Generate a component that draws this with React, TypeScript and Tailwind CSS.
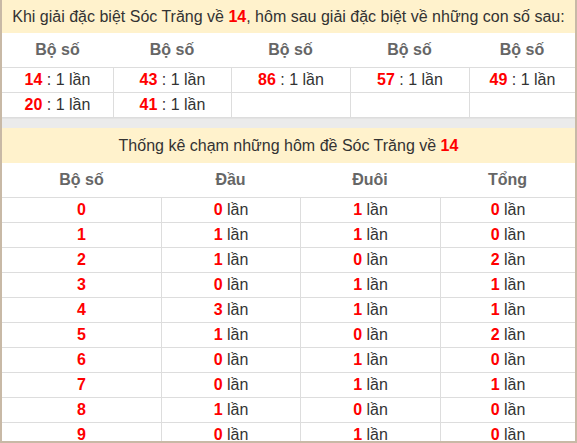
import React from "react";

const top = [
  ["14", "43", "86", "57", "49"],
  ["20", "41", "", "", ""],
];

const stats = [
  [0, 0, 1, 0],
  [1, 1, 1, 0],
  [2, 1, 0, 2],
  [3, 0, 1, 1],
  [4, 3, 1, 1],
  [5, 1, 0, 2],
  [6, 0, 1, 0],
  [7, 0, 1, 1],
  [8, 1, 0, 0],
  [9, 0, 1, 0],
];

const topCols = "grid grid-cols-[111px_118px_119px_119px_106px]";
const statCols = "grid grid-cols-[159px_139px_140px_135px]";

const Lan = ({ n }: { n: number }) => (
  <span>
    <b className="text-[#ff0000]">{n}</b> lần
  </span>
);

const App = () => {
  return (
    <div
      className="w-[577px] h-[443px] overflow-hidden border-x-2 border-b-2 border-[#c8b9a6] bg-white text-[16px] text-[#333]"
      style={{ fontFamily: '"Liberation Sans", Arial, sans-serif' }}
    >
      {/* first table */}
      <div className="h-[33px] bg-[#fff2cc] flex items-center justify-center">
        <span>
          Khi giải đặc biệt Sóc Trăng về <b className="text-[#ff0000]">14</b>, hôm sau giải đặc biệt về những con số sau:
        </span>
      </div>
      <div className={topCols + " h-[35px] border-b border-[#ddd] font-bold text-[#666]"}>
        {top[0].map((_, i) => (
          <div key={i} className="flex items-center justify-center">Bộ số</div>
        ))}
      </div>
      {top.map((row, r) => (
        <div key={r} className={topCols + " h-[25px] border-b border-[#ddd]"}>
          {row.map((v, i) => (
            <div
              key={i}
              className={"flex items-center justify-center " + (i > 0 ? "border-l border-[#ddd]" : "")}
            >
              {v && (
                <span>
                  <b className="text-[#ff0000]">{v}</b> : 1 lần
                </span>
              )}
            </div>
          ))}
        </div>
      ))}
      <div className="h-[10px] bg-[#ebebeb] border-t border-[#e3e3e3]" />

      {/* second table */}
      <div className="h-[35px] bg-[#fff2cc] flex items-center justify-center">
        <span>
          Thống kê chạm những hôm đề Sóc Trăng về <b className="text-[#ff0000]">14</b>
        </span>
      </div>
      <div className={statCols + " h-[35px] border-b border-[#ddd] font-bold text-[#666]"}>
        {["Bộ số", "Đầu", "Đuôi", "Tổng"].map((h) => (
          <div key={h} className="flex items-center justify-center">{h}</div>
        ))}
      </div>
      {stats.map(([d, a, b, c]) => (
        <div key={d} className={statCols + " h-[25px] border-b border-[#ddd]"}>
          <div className="flex items-center justify-center font-bold text-[#ff0000]">{d}</div>
          <div className="flex items-center justify-center border-l border-[#ddd]"><Lan n={a} /></div>
          <div className="flex items-center justify-center border-l border-[#ddd]"><Lan n={b} /></div>
          <div className="flex items-center justify-center border-l border-[#ddd]"><Lan n={c} /></div>
        </div>
      ))}
    </div>
  );
};

export default App;
